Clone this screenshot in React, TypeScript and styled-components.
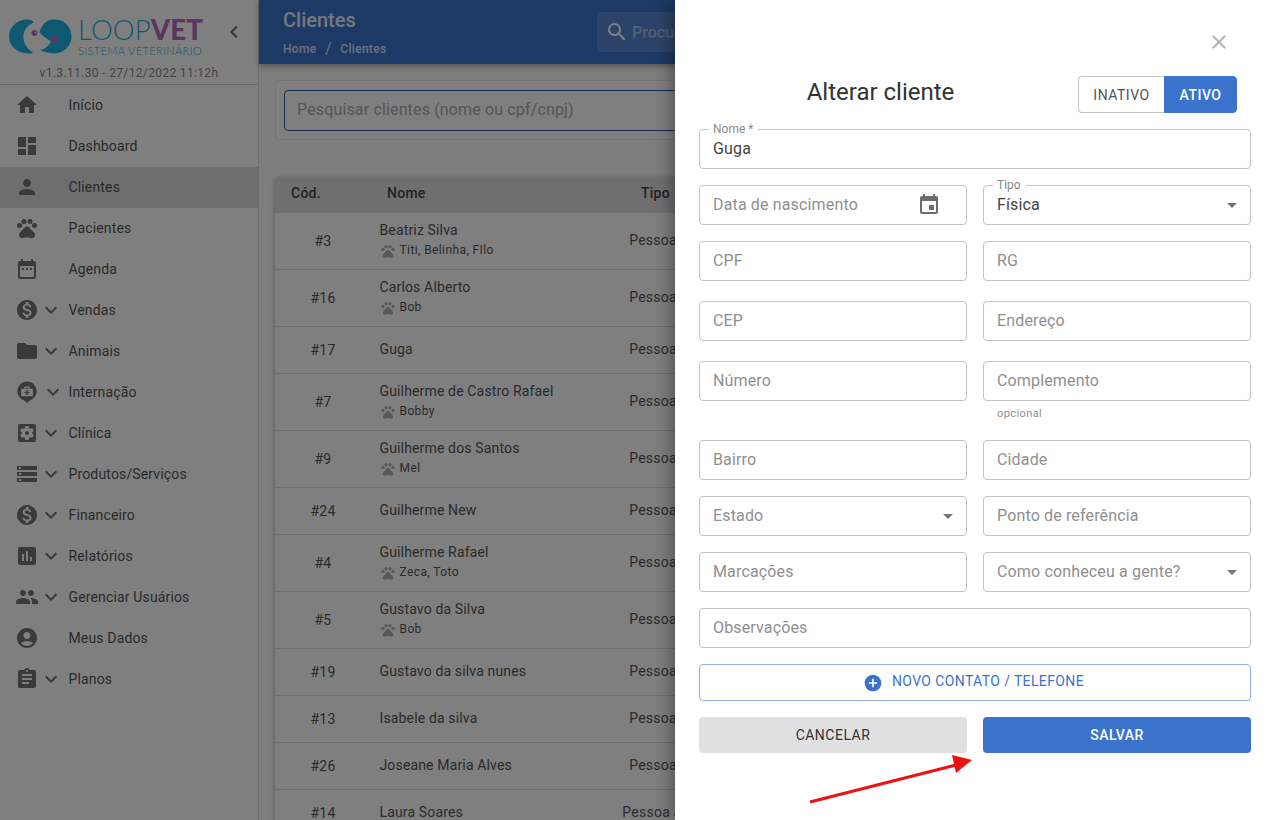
import { ReactNode } from 'react';
import styled, { createGlobalStyle } from 'styled-components';
import { IconType } from 'react-icons';
import {
  MdAccountCircle,
  MdAddCircle,
  MdArrowDropDown,
  MdAssessment,
  MdAssignment,
  MdChevronLeft,
  MdClose,
  MdDashboard,
  MdDateRange,
  MdEvent,
  MdExpandMore,
  MdFolder,
  MdHome,
  MdMonetizationOn,
  MdPeople,
  MdPerson,
  MdPets,
  MdSearch,
  MdSettingsApplications,
  MdStorage,
} from 'react-icons/md';

const blue = '#3b73cc';
const logoBlue = '#1fb0e2';
const logoPurple = '#b56cc6';

const GlobalStyle = createGlobalStyle`
  html, body {
    margin: 0;
    padding: 0;
    background: #fff;
  }
  * {
    box-sizing: border-box;
  }
  body {
    font-family: Roboto, 'Liberation Sans', sans-serif;
    color: #555;
  }
`;

const Page = styled.div`
  position: relative;
  display: flex;
  width: 1272px;
  height: 820px;
  overflow: hidden;
  background: #fff;
`;

const Backdrop = styled.div`
  position: absolute;
  inset: 0;
  background: rgba(0, 0, 0, 0.5);
`;

/* sidebar */
const Sidebar = styled.aside`
  flex: 0 0 259px;
  height: 100%;
  border-right: 1px solid #ddd;
  background: #fff;
`;

const Brand = styled.div`
  height: 85px;
  border-bottom: 1px solid #d0d0d0;
  padding: 19px 0 0 9px;
`;

const BrandRow = styled.div`
  display: flex;
  align-items: flex-start;
`;

const LogoMark = styled.svg`
  flex: 0 0 63px;
  width: 63px;
  height: 35px;
`;

const LogoText = styled.div`
  margin-left: 6px;
  width: 126px;
`;

const LogoName = styled.div`
  font-family: Lato, 'Open Sans', sans-serif;
  font-size: 27.6px;
  line-height: 22px;
  font-weight: 300;
  color: ${logoBlue};
  letter-spacing: 0.1px;
  white-space: nowrap;
`;

const LogoStrong = styled.span`
  font-weight: 900;
  color: ${logoPurple};
`;

const LogoSub = styled.div`
  margin-top: 3px;
  font-family: Lato, 'Open Sans', sans-serif;
  font-size: 11px;
  line-height: 13px;
  font-weight: 300;
  color: ${logoBlue};
  letter-spacing: 0.4px;
  white-space: nowrap;
`;

const Collapse = styled.div`
  display: flex;
  margin: 1px 0 0 18px;
  color: #666;
  font-size: 24px;
`;

const Version = styled.div`
  margin: 8px 0 0 -9px;
  text-align: center;
  font-size: 12px;
  line-height: 16px;
  letter-spacing: 0.35px;
  color: #888;
`;

const Nav = styled.nav`
  display: flex;
  flex-direction: column;
`;

const NavItem = styled.div<{ $active?: boolean }>`
  display: flex;
  align-items: center;
  height: 41px;
  padding: 0 0 2px 15px;
  background: ${p => (p.$active ? '#dcdcdc' : 'transparent')};
`;

const NavIcon = styled.span`
  display: flex;
  justify-content: center;
  flex: 0 0 24px;
  min-width: 0;
  font-size: 24px;
  color: #757575;
`;

const NavChevron = styled.span<{ $nudge?: boolean }>`
  display: flex;
  justify-content: center;
  flex: 0 0 24px;
  font-size: 24px;
  color: #757575;
  transform: translateX(${p => (p.$nudge ? 2 : 0)}px);
`;

const NavLabel = styled.span`
  margin-left: 5.5px;
  font-size: 14px;
  letter-spacing: 0.15px;
  color: #555;
`;

/* main column */
const Main = styled.main`
  flex: 1;
  min-width: 0;
  background: #fafafa;
`;

const TopBar = styled.header`
  display: flex;
  align-items: center;
  height: 64px;
  padding: 0 24px;
  background: ${blue};
  box-shadow: 0 2px 6px rgba(0, 0, 0, 0.35);
`;

const TitleBlock = styled.div`
  flex: 0 0 314px;
  color: #fff;
`;

const PageTitle = styled.div`
  font-size: 20px;
  line-height: 24px;
  font-weight: 500;
  opacity: 0.9;
`;

const Crumbs = styled.div`
  display: flex;
  align-items: center;
  gap: 8.5px;
  margin-top: 9px;
  font-size: 12px;
  line-height: 16px;
  font-weight: 500;
  letter-spacing: 0.3px;
  opacity: 0.8;
`;

const CrumbSep = styled.span`
  font-size: 16px;
  font-weight: 400;
`;

const TopSearch = styled.div`
  display: flex;
  align-items: center;
  gap: 3px;
  width: 420px;
  height: 40px;
  padding-left: 8px;
  border-radius: 4px;
  background: rgba(255, 255, 255, 0.15);
  color: #fff;
  font-size: 24px;
`;

const TopSearchText = styled.span`
  font-size: 16px;
  font-weight: 500;
  opacity: 0.45;
`;

const Content = styled.div`
  padding: 16px;
`;

const SearchCard = styled.div`
  height: 60px;
  padding: 9px 8px;
  border: 1px solid #e8e8e8;
  border-radius: 4px;
  background: #fff;
`;

const SearchBox = styled.div`
  height: 41px;
  padding: 0 12px;
  border: 1px solid #2c5a9e;
  border-radius: 4px;
  font-size: 16px;
  line-height: 37px;
  letter-spacing: 0.15px;
  color: #aaa;
`;

const Table = styled.div`
  margin-top: 37px;
  border-radius: 4px 4px 0 0;
  background: #fff;
  box-shadow: 0 1px 4px rgba(0, 0, 0, 0.3);
`;

const TableRow = styled.div<{ $tall?: boolean }>`
  display: grid;
  grid-template-columns: 96px 250px 106px 1fr;
  align-items: center;
  height: ${p => (p.$tall ? 57 : 47)}px;
  border-bottom: 1px solid #ddd;
`;

const TableHead = styled.div`
  display: grid;
  grid-template-columns: 96px 250px 106px 1fr;
  align-items: center;
  height: 36px;
  padding-bottom: 5px;
  background: #dedede;
  border-radius: 4px 4px 0 0;
  font-size: 14px;
  font-weight: 500;
  letter-spacing: 0.25px;
  color: #444;
`;

const HeadCell = styled.div<{ $left: number }>`
  padding-left: ${p => p.$left}px;
`;

const CodeCell = styled.div`
  text-align: center;
  font-size: 14px;
  letter-spacing: 0.25px;
  color: #555;
`;

const NameCell = styled.div<{ $tall?: boolean }>`
  padding: 0 0 ${p => (p.$tall ? 4 : 2)}px 8.5px;
  font-size: 14px;
  line-height: 20px;
  letter-spacing: 0.15px;
  color: #555;
`;

const Pets = styled.div`
  display: flex;
  align-items: center;
  gap: 4px;
  margin-top: 1px;
  font-size: 12px;
  line-height: 16px;
  letter-spacing: 0.4px;
  color: #555;
`;

const PawIcon = styled(MdPets)`
  color: #b0b0b0;
  font-size: 16px;
  margin-top: 2px;
`;

const TypeCell = styled.div`
  padding-bottom: 2px;
  text-align: center;
  font-size: 14px;
  letter-spacing: 0.25px;
  white-space: nowrap;
  color: #555;
`;

/* drawer */
const Drawer = styled.section`
  position: absolute;
  top: 0;
  right: 0;
  bottom: 0;
  width: 597px;
  padding: 30px 21px 0 24px;
  background: #fff;
  box-shadow: -4px 0 16px rgba(0, 0, 0, 0.35);
`;

const CloseRow = styled.div`
  display: flex;
  justify-content: flex-end;
  height: 46px;
  padding-right: 20px;
  font-size: 24px;
  color: #b5b5b5;
`;

const DrawerHead = styled.div`
  display: flex;
  align-items: center;
  gap: 16px;
  height: 37px;
  margin-bottom: 16px;
  padding-right: 14px;
`;

const DrawerTitle = styled.h2`
  flex: 1;
  margin: 0 0 6px;
  text-align: center;
  font-size: 24px;
  line-height: 32px;
  font-weight: 400;
  color: #333;
`;

const Toggle = styled.div`
  display: flex;
  height: 37px;
`;

const ToggleButton = styled.div<{ $on?: boolean }>`
  display: flex;
  align-items: center;
  justify-content: center;
  width: ${p => (p.$on ? 73 : 86)}px;
  border: 1px solid ${p => (p.$on ? blue : '#c4c4c4')};
  border-right-width: ${p => (p.$on ? 1 : 0)}px;
  border-radius: ${p => (p.$on ? '0 4px 4px 0' : '4px 0 0 4px')};
  background: ${p => (p.$on ? blue : '#fff')};
  color: ${p => (p.$on ? '#fff' : '#555')};
  font-size: 14px;
  font-weight: ${p => (p.$on ? 500 : 400)};
  letter-spacing: 0.5px;
`;

const FormRow = styled.div<{ $after?: number; $single?: boolean }>`
  display: grid;
  grid-template-columns: ${p => (p.$single ? '552px' : '268px 268px')};
  column-gap: 16px;
  margin-bottom: ${p => p.$after ?? 16}px;
`;

const FieldBox = styled.div`
  position: relative;
  display: flex;
  align-items: center;
  height: 40px;
  padding: 0 13px;
  border: 1px solid #c4c4c4;
  border-radius: 4px;
  background: #fff;
`;

const FloatLabel = styled.label`
  position: absolute;
  top: -8px;
  left: 9px;
  padding: 0 5px 0 4px;
  background: #fff;
  font-size: 12px;
  line-height: 14px;
  color: #8a8a8a;
`;

const TextInput = styled.input`
  flex: 1;
  min-width: 0;
  padding: 0 0 1px;
  border: none;
  outline: none;
  background: transparent;
  font-family: inherit;
  font-size: 16px;
  letter-spacing: 0.15px;
  color: #444;

  &::placeholder {
    color: #8f8f8f;
    opacity: 1;
  }
`;

const SelectText = styled.span<{ $filled?: boolean }>`
  flex: 1;
  padding-bottom: 1px;
  font-size: 16px;
  letter-spacing: 0.15px;
  color: ${p => (p.$filled ? '#444' : '#8f8f8f')};
`;

const Caret = styled(MdArrowDropDown)`
  flex: 0 0 24px;
  margin-right: -7px;
  font-size: 24px;
  color: #757575;
`;

const DateIcon = styled(MdEvent)`
  flex: 0 0 24px;
  margin-right: 12px;
  font-size: 24px;
  color: #6d6d6d;
`;

const Helper = styled.div`
  height: 23px;
  padding: 5px 0 0 14px;
  font-size: 11px;
  line-height: 16px;
  letter-spacing: 0.4px;
  color: #8f8f8f;
`;

const AddButton = styled.div`
  display: flex;
  align-items: center;
  justify-content: center;
  gap: 9px;
  width: 552px;
  height: 37px;
  margin-bottom: 16px;
  padding: 0 3px 3px 0;
  border: 1px solid #93b0dd;
  border-radius: 4px;
  background: #fff;
  color: ${blue};
  font-size: 14px;
  font-weight: 400;
  letter-spacing: 0.38px;
`;

const AddIcon = styled(MdAddCircle)`
  font-size: 20px;
  margin-top: 3px;
`;

const Actions = styled.div`
  display: grid;
  grid-template-columns: 268px 268px;
  column-gap: 16px;
`;

const ActionButton = styled.div<{ $primary?: boolean }>`
  display: flex;
  align-items: center;
  justify-content: center;
  height: 36px;
  border-radius: 4px;
  background: ${p => (p.$primary ? blue : '#e0e0e0')};
  color: ${p => (p.$primary ? '#fff' : '#333')};
  font-size: 14px;
  font-weight: ${p => (p.$primary ? 500 : 400)};
  letter-spacing: 0.5px;
`;

const Annotation = styled.svg`
  position: absolute;
  left: 800px;
  top: 750px;
  width: 180px;
  height: 60px;
`;

type NavEntry = {
  label: string;
  icon: ReactNode;
  chevron?: boolean;
  active?: boolean;
  nudge?: boolean;
};

const WardIcon = () => (
  <svg width='26' height='26' viewBox='0 0 26 26' fill='currentColor'>
    <path
      fillRule='evenodd'
      d='M13 1.5a10.5 10.5 0 0 1 3.2 20.5L13 25l-3.2-3A10.5 10.5 0 0 1 13 1.5zM10 8v1.6H7.6c-.6 0-1 .4-1 1v6c0 .6.4 1 1 1h10.8c.6 0 1-.4 1-1v-6c0-.6-.4-1-1-1H16V8c0-.6-.4-1-1-1h-4c-.6 0-1 .4-1 1zm1.4.3h3.2v1.3h-3.2V8.3zM12.2 11h1.6v1.8h1.8v1.6h-1.8v1.8h-1.6v-1.8h-1.8v-1.6h1.8V11z'
    />
  </svg>
);

const icon = (Glyph: IconType) => <Glyph />;

const navItems: NavEntry[] = [
  { label: 'Início', icon: icon(MdHome) },
  { label: 'Dashboard', icon: icon(MdDashboard) },
  { label: 'Clientes', icon: icon(MdPerson), active: true },
  { label: 'Pacientes', icon: icon(MdPets) },
  { label: 'Agenda', icon: icon(MdDateRange) },
  { label: 'Vendas', icon: icon(MdMonetizationOn), chevron: true },
  { label: 'Animais', icon: icon(MdFolder), chevron: true },
  { label: 'Internação', icon: <WardIcon />, chevron: true, nudge: true },
  { label: 'Clínica', icon: icon(MdSettingsApplications), chevron: true },
  { label: 'Produtos/Serviços', icon: icon(MdStorage), chevron: true },
  { label: 'Financeiro', icon: icon(MdMonetizationOn), chevron: true },
  { label: 'Relatórios', icon: icon(MdAssessment), chevron: true },
  { label: 'Gerenciar Usuários', icon: icon(MdPeople), chevron: true },
  { label: 'Meus Dados', icon: icon(MdAccountCircle) },
  { label: 'Planos', icon: icon(MdAssignment), chevron: true },
];

const clients = [
  { code: '#3', name: 'Beatriz Silva', pets: 'Titi, Belinha, FIlo' },
  { code: '#16', name: 'Carlos Alberto', pets: 'Bob' },
  { code: '#17', name: 'Guga' },
  { code: '#7', name: 'Guilherme de Castro Rafael', pets: 'Bobby' },
  { code: '#9', name: 'Guilherme dos Santos', pets: 'Mel' },
  { code: '#24', name: 'Guilherme New' },
  { code: '#4', name: 'Guilherme Rafael', pets: 'Zeca, Toto' },
  { code: '#5', name: 'Gustavo da Silva', pets: 'Bob' },
  { code: '#19', name: 'Gustavo da silva nunes' },
  { code: '#13', name: 'Isabele da silva' },
  { code: '#26', name: 'Joseane Maria Alves' },
  { code: '#14', name: 'Laura Soares', type: 'Pessoa Jurídica' },
];

const Input = ({ placeholder }: { placeholder: string }) => (
  <FieldBox>
    <TextInput placeholder={placeholder} readOnly />
  </FieldBox>
);

const Select = ({ placeholder }: { placeholder: string }) => (
  <FieldBox>
    <SelectText>{placeholder}</SelectText>
    <Caret />
  </FieldBox>
);

const Logo = () => (
  <LogoMark viewBox='0 0 63 35'>
    <path
      d='M19 .6C8 .6 0 8 0 17.5S8 34.4 19 34.4c2.6 0 4.6-.5 5.2-1C19 31 14.4 25 14.4 17.5S19.6 6 24.6 3.6C24 1.6 21.6.6 19 .6z'
      fill={logoBlue}
    />
    <path
      d='M45.5.6C55.5.6 62.5 8 62.5 17.5S55 34.4 45 34.4c-6 0-11-1.6-14-3.4 4-1 9-4 11-8.6-3-2-8-5-11.5-9C33 5 38 .6 45.5.6z'
      fill={logoBlue}
    />
    <circle cx='25.5' cy='14' r='3' fill={logoPurple} />
    <circle cx='26.6' cy='13.6' r='1' fill='#eee' />
    <path
      d='M42 22.4c1-2 1-4.2 1.2-6.2 3.2 0 6.4 1.8 6 4.4-.4 2.4-2.6 4.6-5 4.4-1.2-.2-1.8-1.2-2.2-2.6z'
      fill={logoPurple}
    />
  </LogoMark>
);

export default function App() {
  return (
    <Page>
      <GlobalStyle />
      <Sidebar>
        <Brand>
          <BrandRow>
            <Logo />
            <LogoText>
              <LogoName>
                LOOP<LogoStrong>VET</LogoStrong>
              </LogoName>
              <LogoSub>SISTEMA VETERINÁRIO</LogoSub>
            </LogoText>
            <Collapse>
              <MdChevronLeft />
            </Collapse>
          </BrandRow>
          <Version>v1.3.11.30 - 27/12/2022 11:12h</Version>
        </Brand>
        <Nav>
          {navItems.map(item => (
            <NavItem key={item.label} $active={item.active}>
              <NavIcon>{item.icon}</NavIcon>
              <NavChevron $nudge={item.nudge}>
                {item.chevron && <MdExpandMore />}
              </NavChevron>
              <NavLabel>{item.label}</NavLabel>
            </NavItem>
          ))}
        </Nav>
      </Sidebar>

      <Main>
        <TopBar>
          <TitleBlock>
            <PageTitle>Clientes</PageTitle>
            <Crumbs>
              Home <CrumbSep>/</CrumbSep> Clientes
            </Crumbs>
          </TitleBlock>
          <TopSearch>
            <MdSearch />
            <TopSearchText>Procurar...</TopSearchText>
          </TopSearch>
        </TopBar>
        <Content>
          <SearchCard>
            <SearchBox>Pesquisar clientes (nome ou cpf/cnpj)</SearchBox>
          </SearchCard>
          <Table>
            <TableHead>
              <HeadCell $left={16}>Cód.</HeadCell>
              <HeadCell $left={16}>Nome</HeadCell>
              <HeadCell $left={20}>Tipo</HeadCell>
            </TableHead>
            {clients.map(client => (
              <TableRow key={client.code} $tall={!!client.pets}>
                <CodeCell>{client.code}</CodeCell>
                <NameCell $tall={!!client.pets}>
                  {client.name}
                  {client.pets && (
                    <Pets>
                      <PawIcon />
                      {client.pets}
                    </Pets>
                  )}
                </NameCell>
                <TypeCell>{client.type ?? 'Pessoa Física'}</TypeCell>
              </TableRow>
            ))}
          </Table>
        </Content>
      </Main>

      <Backdrop />

      <Drawer>
        <CloseRow>
          <MdClose />
        </CloseRow>
        <DrawerHead>
          <DrawerTitle>Alterar cliente</DrawerTitle>
          <Toggle>
            <ToggleButton>INATIVO</ToggleButton>
            <ToggleButton $on>ATIVO</ToggleButton>
          </Toggle>
        </DrawerHead>

        <FormRow $single>
          <FieldBox>
            <FloatLabel>Nome *</FloatLabel>
            <TextInput defaultValue='Guga' readOnly />
          </FieldBox>
        </FormRow>
        <FormRow>
          <FieldBox>
            <TextInput placeholder='Data de nascimento' readOnly />
            <DateIcon />
          </FieldBox>
          <FieldBox>
            <FloatLabel>Tipo</FloatLabel>
            <SelectText $filled>Física</SelectText>
            <Caret />
          </FieldBox>
        </FormRow>
        <FormRow $after={20}>
          <Input placeholder='CPF' />
          <Input placeholder='RG' />
        </FormRow>
        <FormRow $after={20}>
          <Input placeholder='CEP' />
          <Input placeholder='Endereço' />
        </FormRow>
        <FormRow>
          <Input placeholder='Número' />
          <div>
            <Input placeholder='Complemento' />
            <Helper>opcional</Helper>
          </div>
        </FormRow>
        <FormRow>
          <Input placeholder='Bairro' />
          <Input placeholder='Cidade' />
        </FormRow>
        <FormRow>
          <Select placeholder='Estado' />
          <Input placeholder='Ponto de referência' />
        </FormRow>
        <FormRow>
          <Input placeholder='Marcações' />
          <Select placeholder='Como conheceu a gente?' />
        </FormRow>
        <FormRow $single>
          <Input placeholder='Observações' />
        </FormRow>

        <AddButton>
          <AddIcon />
          NOVO CONTATO / TELEFONE
        </AddButton>
        <Actions>
          <ActionButton>CANCELAR</ActionButton>
          <ActionButton $primary>SALVAR</ActionButton>
        </Actions>
      </Drawer>

      <Annotation viewBox='0 0 180 60'>
        <line x1='10' y1='52' x2='160' y2='14' stroke='#ee1111' strokeWidth='3' />
        <polygon points='172,10 152,5 156,23' fill='#ee1111' />
      </Annotation>
    </Page>
  );
}
